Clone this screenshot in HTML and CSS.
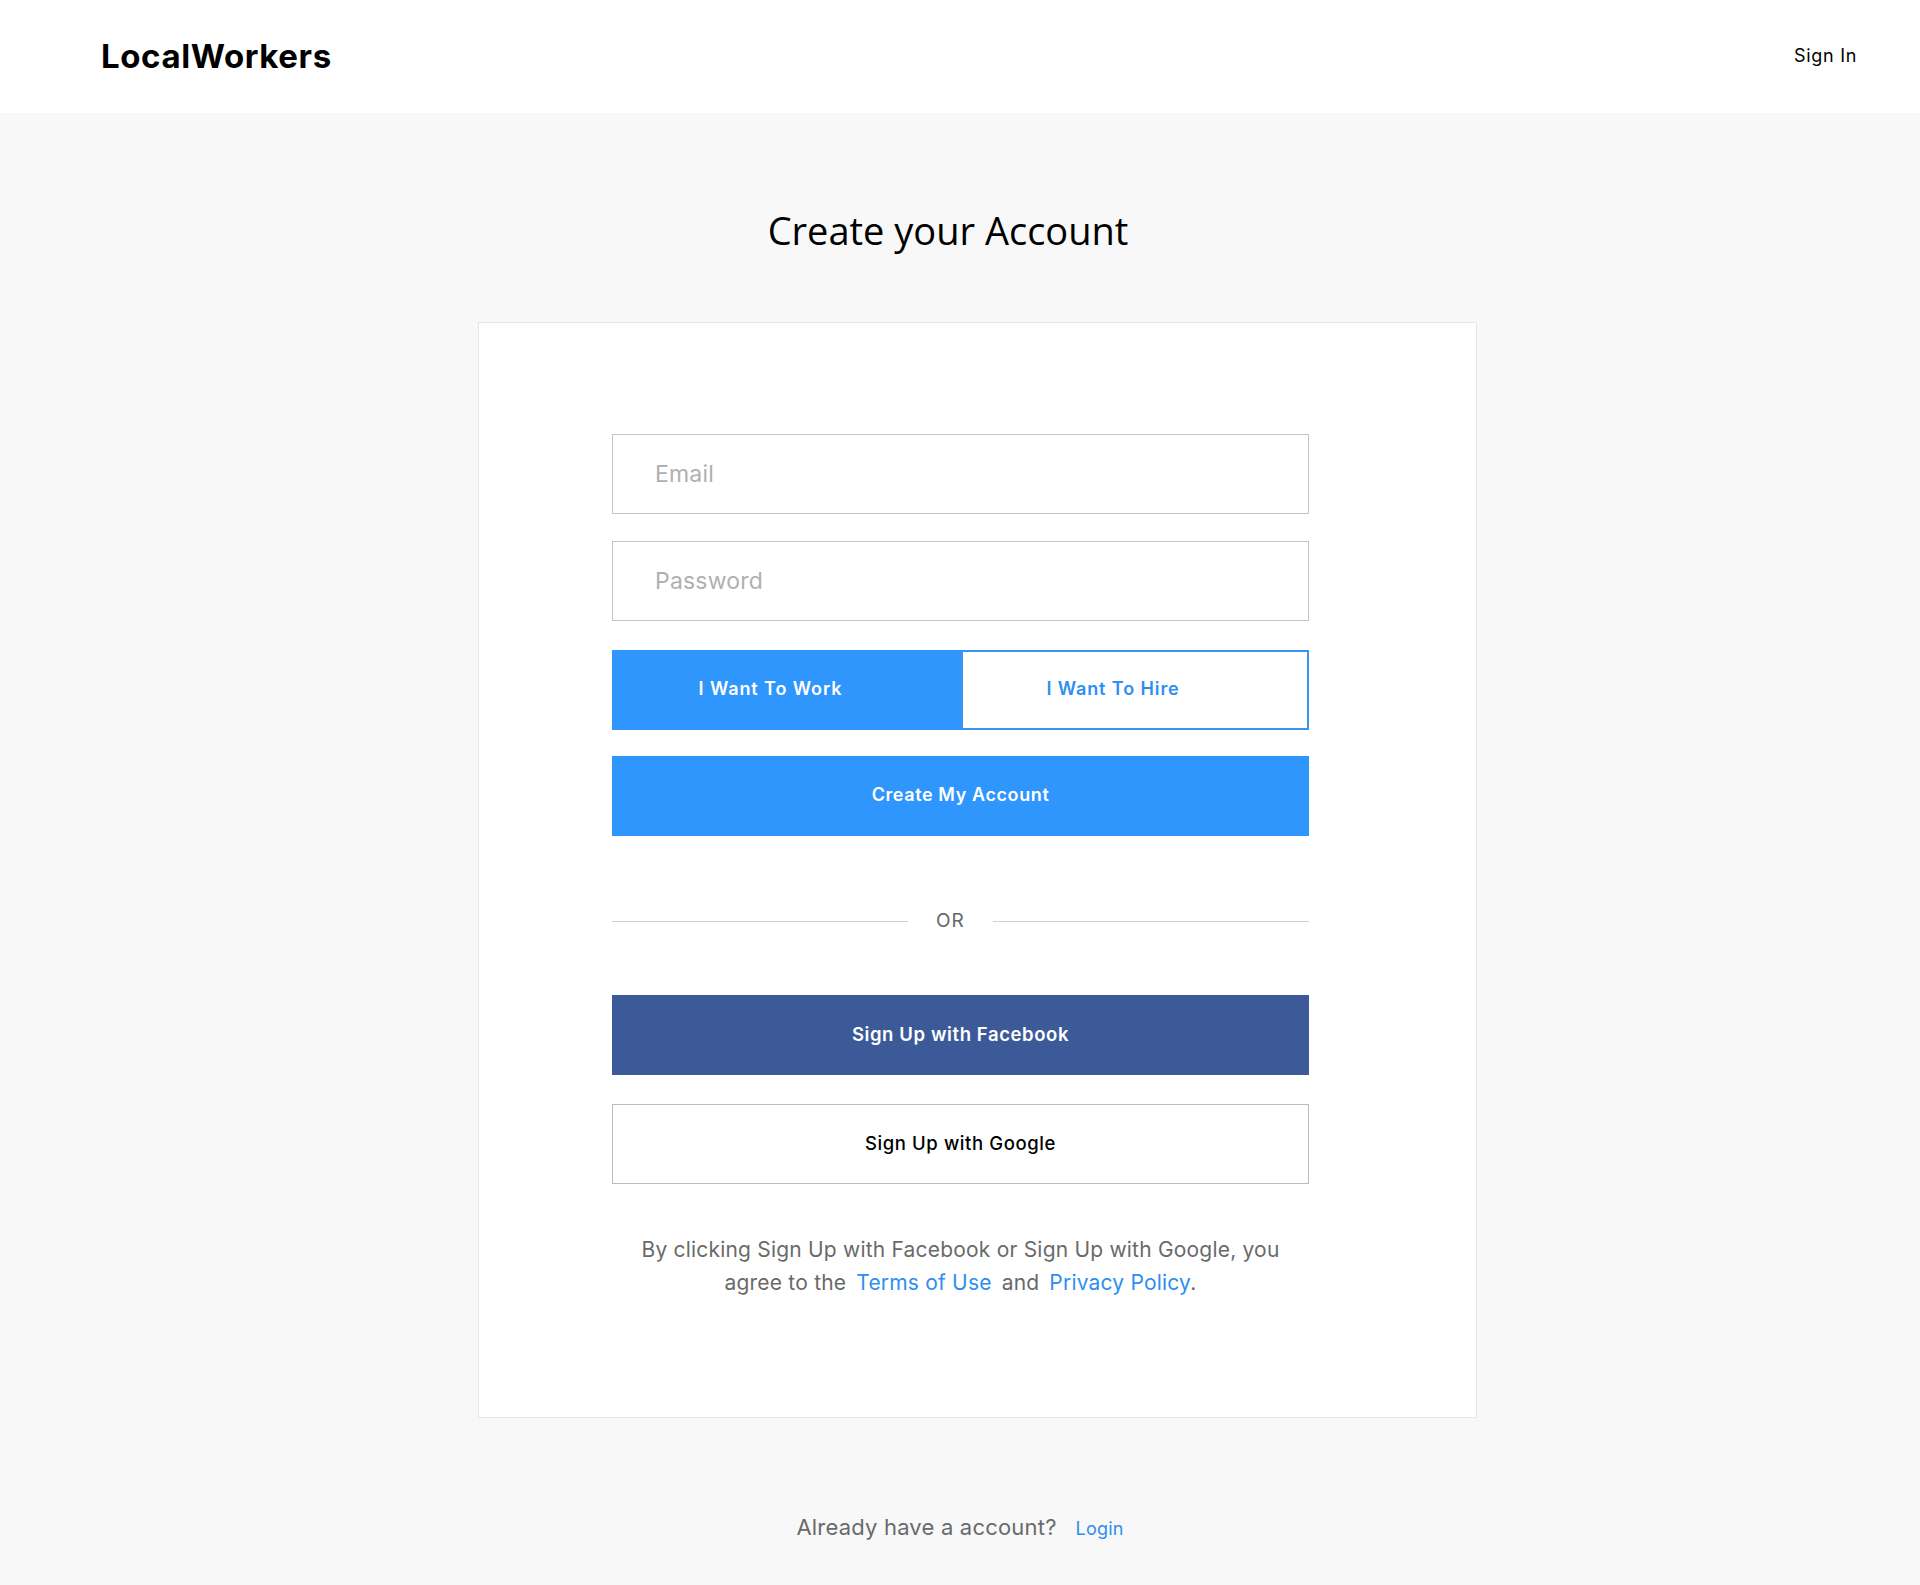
FILE: index.html
```html
<!DOCTYPE html>
<html lang="en">
<head>
<meta charset="utf-8">
<title>LocalWorkers - Create your Account</title>
<link rel="stylesheet" href="styles.css">
</head>
<body>
<header class="topbar">
  <a class="logo" href="#">LocalWorkers</a>
  <a class="signin" href="#">Sign In</a>
</header>
<main class="page">
  <h1 class="title">Create your Account</h1>
  <section class="card">
    <form class="form">
      <input class="field" type="email" placeholder="Email">
      <input class="field" type="password" placeholder="Password">
      <div class="toggle">
        <button type="button" class="toggle-btn toggle-work">I Want To Work</button>
        <button type="button" class="toggle-btn toggle-hire">I Want To Hire</button>
      </div>
      <button type="button" class="btn btn-primary">Create My Account</button>
      <div class="divider">
        <span class="divider-line divider-left"></span>
        <span class="divider-text">OR</span>
        <span class="divider-line divider-right"></span>
      </div>
      <button type="button" class="btn btn-facebook">Sign Up with Facebook</button>
      <button type="button" class="btn btn-google">Sign Up with Google</button>
      <p class="terms"><span class="terms-line">By clicking Sign Up with Facebook or Sign Up with Google, you</span><br><span class="terms-text">agree to the</span><a class="link link-terms" href="#">Terms of Use</a><span class="terms-text">and</span><a class="link link-privacy" href="#">Privacy Policy</a><span class="terms-dot">.</span></p>
    </form>
  </section>
  <p class="already"><span class="already-text">Already have a account?</span><a class="login" href="#">Login</a></p>
</main>
</body>
</html>
```

FILE: styles.css
```css
* { box-sizing: border-box; }

html, body {
  margin: 0;
  padding: 0;
  background: #f8f8f8;
  font-family: "Inter", "Open Sans", "DejaVu Sans", sans-serif;
  color: #000;
}

a { text-decoration: none; }

.topbar {
  height: 113px;
  background: #ffffff;
  display: flex;
  align-items: center;
  justify-content: space-between;
  padding: 0 63px 2px 101px;
}

.logo {
  font-size: 33px;
  font-weight: 700;
  color: #000;
  letter-spacing: 0.6px;
  line-height: 40px;
}

.signin {
  font-size: 18px;
  color: #000;
  letter-spacing: 0.7px;
  line-height: 24px;
}

.page {
  display: flex;
  flex-direction: column;
  align-items: stretch;
}

.title {
  margin: 94px 0 69px;
  text-align: center;
  font-family: "Open Sans", "Noto Sans", sans-serif;
  font-weight: 400;
  font-size: 38px;
  line-height: 46px;
  color: #000;
  padding-right: 24px;
}

.card {
  width: 999px;
  margin-left: calc(50% - 482px);
  background: #ffffff;
  border: 1px solid #e6e6e6;
  padding: 111px 167px 118px 133px;
}

.form {
  display: flex;
  flex-direction: column;
}

.field {
  height: 80px;
  width: 100%;
  border: 1px solid #c4c4c4;
  background: #fff;
  padding: 0 20px 0 42px;
  font-family: inherit;
  font-size: 23px;
  letter-spacing: 0.2px;
  color: #333;
  outline: none;
  margin: 0 0 27px;
}

.field::placeholder { color: #b0b0b0; }

.field + .field { margin-bottom: 29px; }

.toggle {
  display: flex;
  height: 80px;
  margin-bottom: 26px;
}

.toggle-btn {
  flex: 1 1 0;
  height: 80px;
  font-family: inherit;
  font-size: 18px;
  font-weight: 600;
  letter-spacing: 0.9px;
  cursor: pointer;
}

.toggle-work {
  background: #2f96fd;
  color: #fff;
  border: none;
  padding: 0 32px 3px 0;
  flex-basis: 349px;
  flex-grow: 0;
}

.toggle-hire {
  background: #fff;
  color: #2f8ff0;
  border: 2px solid #3a94f2;
  padding: 0 44px 3px 0;
}

.btn {
  display: block;
  width: 100%;
  height: 80px;
  border: none;
  padding: 0 0 3px;
  font-family: inherit;
  font-size: 18px;
  font-weight: 600;
  letter-spacing: 0.6px;
  cursor: pointer;
}

.btn-primary {
  background: #2f96fd;
  color: #fff;
}

.divider {
  display: flex;
  align-items: center;
  height: 20px;
  margin: 75px 0 64px;
}

.divider-line {
  height: 1px;
  background: #cfcfcf;
}

.divider-left { width: 296px; }
.divider-right { flex: 1; }

.divider-text {
  margin: 0 28px;
  font-size: 19px;
  line-height: 20px;
  color: #666;
  letter-spacing: 0.9px;
}

.btn-facebook {
  background: #3c5a98;
  color: #fff;
  margin-bottom: 29px;
  font-size: 18.5px;
  letter-spacing: 0.6px;
}

.btn-google {
  background: #fff;
  color: #000;
  font-weight: 500;
  font-size: 18.5px;
  letter-spacing: 0.6px;
  border: 1px solid #bdbdbd;
}

.terms {
  margin: 49px 0 0;
  text-align: center;
  font-size: 21px;
  line-height: 33px;
  color: #6a6a6a;
  letter-spacing: 0.2px;
}

.link {
  color: #2e8ef0;
  margin: 0 10px;
}

.link-privacy { margin-right: 0; }

.already {
  margin: 94px 0 40px;
  text-align: center;
  font-size: 22px;
  line-height: 30px;
  color: #6a6a6a;
  letter-spacing: 0.2px;
}

.login {
  font-size: 18px;
  color: #2e8ef0;
  margin-left: 19px;
}
```
